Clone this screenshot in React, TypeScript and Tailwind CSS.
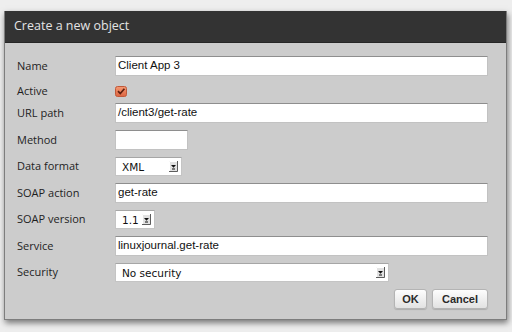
const LABEL_FONT = "font-['Open_Sans',_'DejaVu_Sans',_sans-serif]";

function TextField({ value, width }: { value?: string; width?: string }) {
  return (
    <div
      className={`h-[20px] ${width ?? 'w-full'} bg-white border border-[#c2c2c2] border-t-[#8e8e8e] pl-[2px] flex items-center text-[11.5px] text-[#111] font-['Liberation_Sans',_Arial,_sans-serif]`}
    >
      {value}
    </div>
  );
}

function SelectArrow() {
  return (
    <svg width="9" height="11" viewBox="0 0 9 11" className="shrink-0">
      <rect x="0" y="0" width="9" height="11" fill="#e2e2e2" />
      <path d="M0.5 10.5 V0.5 H8.5" fill="none" stroke="#ffffff" />
      <path d="M0 10.5 H8.5 V0" fill="none" stroke="#5c5c5c" />
      <polygon points="2,4 7,4 4.5,6.8" fill="#111" />
      <rect x="3" y="7.5" width="3" height="1" fill="#111" />
    </svg>
  );
}

function SelectField({ value, width }: { value: string; width: string }) {
  return (
    <div
      className={`h-[19px] ${width} bg-white border border-[#c4c4c4] border-t-[#a6a6a6] pl-[6px] pr-[3px] flex items-center justify-between text-[10.5px] text-[#111] font-['DejaVu_Sans',_sans-serif]`}
    >
      <span className="pt-[2px]">{value}</span>
      <SelectArrow />
    </div>
  );
}

function Checkbox() {
  return (
    <svg width="12" height="11" viewBox="0 0 12 11">
      <defs>
        <linearGradient id="cb" x1="0" y1="0" x2="0" y2="1">
          <stop offset="0" stopColor="#f59a74" />
          <stop offset="1" stopColor="#dc6440" />
        </linearGradient>
      </defs>
      <rect x="0.5" y="0.5" width="11" height="10" rx="2" fill="url(#cb)" stroke="#c0593a" />
      <path d="M3 5.2 L5.3 7.6 L9.4 2.8" fill="none" stroke="#5e1f0f" strokeWidth="1.7" />
    </svg>
  );
}

function Button({ label, width }: { label: string; width: string }) {
  return (
    <button
      className={`h-[20px] ${width} rounded-[3px] border border-[#b4b4b4] bg-gradient-to-b from-[#fdfdfd] to-[#e2e2e2] text-[11px] font-bold text-[#2a2a2a] font-['Liberation_Sans',_Arial,_sans-serif] shadow-[0_1px_1px_rgba(0,0,0,0.15)]`}
    >
      {label}
    </button>
  );
}

const ROWS: { label: string; field: React.ReactNode; short?: boolean }[] = [
  { label: 'Name', field: <TextField value="Client App 3" /> },
  { label: 'Active', field: <Checkbox />, short: true },
  { label: 'URL path', field: <TextField value="/client3/get-rate" /> },
  { label: 'Method', field: <TextField width="w-[73px]" /> },
  { label: 'Data format', field: <SelectField value="XML" width="w-[67px]" /> },
  { label: 'SOAP action', field: <TextField value="get-rate" /> },
  { label: 'SOAP version', field: <SelectField value="1.1" width="w-[40px]" /> },
  { label: 'Service', field: <TextField value="linuxjournal.get-rate" /> },
  { label: 'Security', field: <SelectField value="No security" width="w-[274px]" /> },
];

export default function App() {
  return (
    <div className="w-[512px] h-[332px] bg-[#eeeeee] pt-[11px] pl-[4px] overflow-hidden">
      <div className="w-[503px] h-[309px] flex flex-col bg-[#cccccc] border-x border-b border-[#7d7d7d] shadow-[1px_3px_6px_rgba(0,0,0,0.5)]">
        <div className="h-[32px] shrink-0 bg-[#333333] border-b border-[#262626] pl-[9px] flex items-center">
          <span className={`text-[12.5px] text-[#e4e4e4] ${LABEL_FONT}`}>Create a new object</span>
        </div>

        <div className="flex-1 pt-[13px] pl-[12px] pr-[18px] flex flex-col gap-[7px]">
          {ROWS.map((row) => (
            <div
              key={row.label}
              className={`grid grid-cols-[98px_1fr] items-center ${row.short ? 'h-[13px]' : ''}`}
            >
              <span className={`text-[11px] text-[#1e1e1e] ${LABEL_FONT}`}>{row.label}</span>
              <div className="flex items-center">{row.field}</div>
            </div>
          ))}

          <div className="flex justify-end gap-[5px]">
            <Button label="OK" width="w-[33px]" />
            <Button label="Cancel" width="w-[56px]" />
          </div>
        </div>
      </div>
    </div>
  );
}
